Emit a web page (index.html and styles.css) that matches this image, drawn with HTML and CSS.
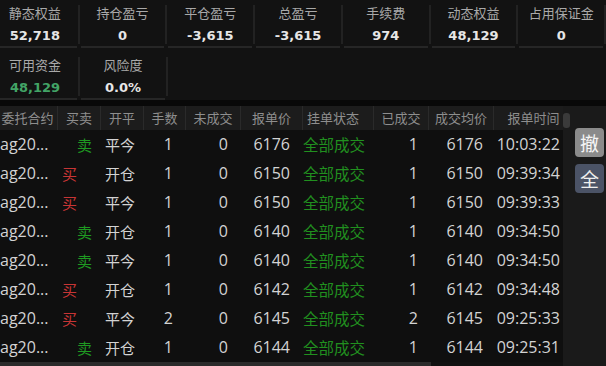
FILE: index.html
```html
<!DOCTYPE html>
<html lang="zh-CN">
<head>
<meta charset="utf-8">
<link rel="stylesheet" href="styles.css">
</head>
<body>
<div class="wrap">
  <div class="summary">
    <div class="srow">
      <div class="cell"><div class="cbody"><div class="lbl">静态权益</div><div class="val">52,718</div></div></div>
      <div class="cell"><div class="cbody"><div class="lbl">持仓盈亏</div><div class="val">0</div></div></div>
      <div class="cell"><div class="cbody"><div class="lbl">平仓盈亏</div><div class="val">-3,615</div></div></div>
      <div class="cell"><div class="cbody"><div class="lbl">总盈亏</div><div class="val">-3,615</div></div></div>
      <div class="cell"><div class="cbody"><div class="lbl">手续费</div><div class="val">974</div></div></div>
      <div class="cell"><div class="cbody"><div class="lbl">动态权益</div><div class="val">48,129</div></div></div>
      <div class="cell"><div class="cbody"><div class="lbl">占用保证金</div><div class="val">0</div></div></div>
    </div>
    <div class="srow">
      <div class="cell"><div class="cbody"><div class="lbl">可用资金</div><div class="val green">48,129</div></div></div>
      <div class="cell"><div class="cbody"><div class="lbl">风险度</div><div class="val">0.0%</div></div></div>
    </div>
  </div>
  <div class="strip"></div>
  <div class="main">
    <div class="tablecol">
      <div class="table">
        <div class="thead">
          <div class="th">委托合约</div><div class="th">买卖</div><div class="th">开平</div><div class="th">手数</div><div class="th">未成交</div><div class="th">报单价</div><div class="th th-status">挂单状态</div><div class="th">已成交</div><div class="th">成交均价</div><div class="th th-time">报单时间</div>
        </div>
        <div class="tr"><div class="td c0">ag20...</div><div class="td sell">卖</div><div class="td c2">平今</div><div class="td num">1</div><div class="td num">0</div><div class="td num">6176</div><div class="td st">全部成交</div><div class="td num n7">1</div><div class="td num n8">6176</div><div class="td tm">10:03:22</div></div>
        <div class="tr"><div class="td c0">ag20...</div><div class="td buy">买</div><div class="td c2">开仓</div><div class="td num">1</div><div class="td num">0</div><div class="td num">6150</div><div class="td st">全部成交</div><div class="td num n7">1</div><div class="td num n8">6150</div><div class="td tm">09:39:34</div></div>
        <div class="tr"><div class="td c0">ag20...</div><div class="td buy">买</div><div class="td c2">平今</div><div class="td num">1</div><div class="td num">0</div><div class="td num">6150</div><div class="td st">全部成交</div><div class="td num n7">1</div><div class="td num n8">6150</div><div class="td tm">09:39:33</div></div>
        <div class="tr"><div class="td c0">ag20...</div><div class="td sell">卖</div><div class="td c2">开仓</div><div class="td num">1</div><div class="td num">0</div><div class="td num">6140</div><div class="td st">全部成交</div><div class="td num n7">1</div><div class="td num n8">6140</div><div class="td tm">09:34:50</div></div>
        <div class="tr"><div class="td c0">ag20...</div><div class="td sell">卖</div><div class="td c2">平今</div><div class="td num">1</div><div class="td num">0</div><div class="td num">6140</div><div class="td st">全部成交</div><div class="td num n7">1</div><div class="td num n8">6140</div><div class="td tm">09:34:50</div></div>
        <div class="tr"><div class="td c0">ag20...</div><div class="td buy">买</div><div class="td c2">开仓</div><div class="td num">1</div><div class="td num">0</div><div class="td num">6142</div><div class="td st">全部成交</div><div class="td num n7">1</div><div class="td num n8">6142</div><div class="td tm">09:34:48</div></div>
        <div class="tr"><div class="td c0">ag20...</div><div class="td buy">买</div><div class="td c2">平今</div><div class="td num">2</div><div class="td num">0</div><div class="td num">6145</div><div class="td st">全部成交</div><div class="td num n7">2</div><div class="td num n8">6145</div><div class="td tm">09:25:33</div></div>
        <div class="tr"><div class="td c0">ag20...</div><div class="td sell">卖</div><div class="td c2">开仓</div><div class="td num">1</div><div class="td num">0</div><div class="td num">6144</div><div class="td st">全部成交</div><div class="td num n7">1</div><div class="td num n8">6144</div><div class="td tm">09:25:31</div></div>
      </div>
      <div class="hscroll"><div class="hthumb"></div></div>
    </div>
    <div class="vscroll"><div class="vthumb"></div></div>
    <div class="side">
      <div class="btn btn-cancel">撤</div>
      <div class="btn btn-all">全</div>
    </div>
  </div>
</div>
</body>
</html>
```

FILE: styles.css
```css
* { box-sizing: border-box; }
html, body { margin: 0; padding: 0; background: #111111; }
body { overflow: hidden; font-family: "Open Sans", "Noto Sans CJK SC", sans-serif; }
.wrap { width: 606px; height: 366px; overflow: hidden; }

.summary { margin-left: -8px; height: 100px; display: flex; flex-direction: column; gap: 4px; background: #121212; }
.srow { display: flex; height: 48px; }
.cell { width: 88px; display: flex; }
.cell::after { content: ""; width: 2px; margin: 5px 0 4px; background: #222222; }
.cbody { flex: 1; margin: 0 1px; border-bottom: 2px solid #262626; padding-top: 4px; text-align: center; }
.lbl { font-family: "Noto Sans CJK SC", sans-serif; font-size: 13px; line-height: 18px; color: #a9a9a9; }
.val { margin-top: 5px; font-family: "DejaVu Sans", sans-serif; font-weight: bold; font-size: 13px; line-height: 18px; color: #e6e6e6; }
.val.green { color: #42a466; }

.strip { height: 6px; background: #080808; }

.main { display: flex; height: 260px; }
.tablecol { width: 571px; margin-left: -8px; display: flex; flex-direction: column; background: #0f0f0f; }
.table { flex: 1; }
.thead, .tr { display: grid; grid-template-columns: 65px 43px 43px 42px 55px 62px 71px 55px 65px 70px; }
.thead { height: 24px; background: #1c1c1c; }
.th { font-family: "Noto Sans CJK SC", sans-serif; font-size: 13px; line-height: 24px; color: #8e8e8e; text-align: center; border-left: 1px solid #2a2a2a; white-space: nowrap; }
.th:first-child { border-left: none; padding-left: 6px; }
.th-status { text-align: left; padding-left: 4px; }
.th-time { padding-left: 10px; }

.tr { height: 29px; }
.td { font-size: 16px; line-height: 29px; color: #d3d3d3; white-space: nowrap; }
.c0 { padding-left: 8px; }
.buy { color: #c73535; padding-left: 5px; font-family: "Noto Sans CJK SC", sans-serif; font-size: 15px; }
.sell { color: #1f9a22; text-align: right; padding-right: 8px; font-family: "Noto Sans CJK SC", sans-serif; font-size: 15px; }
.c2 { padding-left: 5px; font-family: "Noto Sans CJK SC", sans-serif; font-size: 15px; }
.num { text-align: right; padding-right: 12px; }
.n7, .n8 { padding-right: 10px; }
.st { color: #21901f; padding-left: 1px; font-family: "Noto Sans CJK SC", sans-serif; font-size: 15.5px; }
.tm { text-align: right; padding-right: 3px; }

.hscroll { height: 4px; background: #111111; }
.hthumb { width: 439px; height: 4px; background: #2b2b2b; }

.vscroll { width: 8px; background: #1a1a1a; padding-top: 7px; }
.vthumb { width: 7px; height: 15px; background: #3a3a3a; border-radius: 3px; }

.side { width: 35px; background: #1a1a1a; padding: 22px 2px 0 4px; display: flex; flex-direction: column; gap: 7px; }
.btn { width: 29px; height: 29px; border-radius: 4px; font-family: "Noto Sans CJK SC", sans-serif; font-size: 19px; line-height: 29px; text-align: center; }
.btn-cancel { background: #8b8b8b; color: #f5f5f5; }
.btn-all { background: #4b5366; color: #eeeeee; }
```
